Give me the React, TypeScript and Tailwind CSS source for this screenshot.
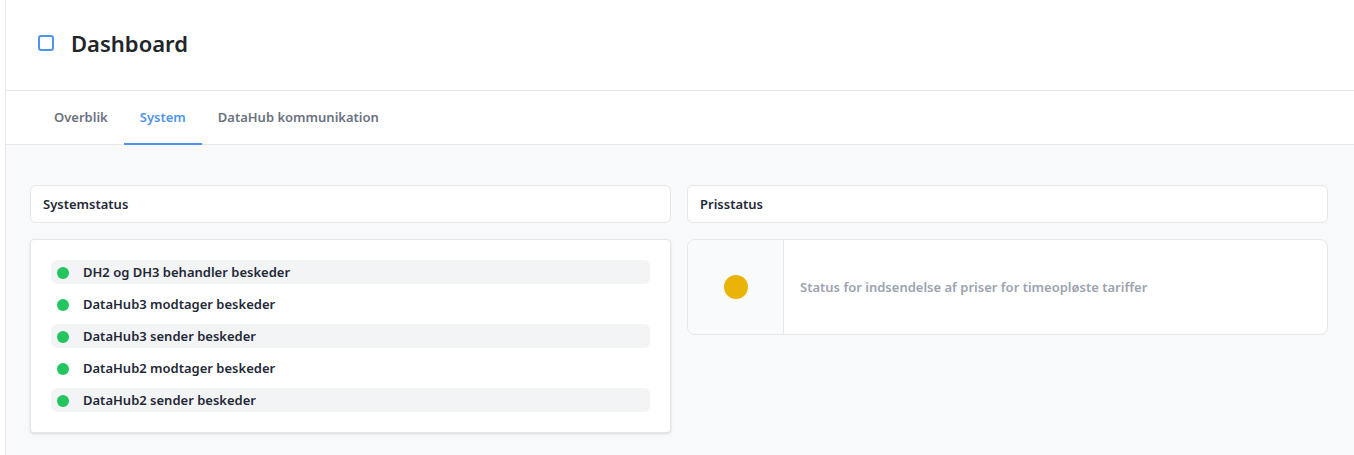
import React from 'react';

type Status = 'ok' | 'warning';

interface SystemCheck {
  label: string;
  status: Status;
}

const systemChecks: SystemCheck[] = [
  { label: 'DH2 og DH3 behandler beskeder', status: 'ok' },
  { label: 'DataHub3 modtager beskeder', status: 'ok' },
  { label: 'DataHub3 sender beskeder', status: 'ok' },
  { label: 'DataHub2 modtager beskeder', status: 'ok' },
  { label: 'DataHub2 sender beskeder', status: 'ok' },
];

const tabs = ['Overblik', 'System', 'DataHub kommunikation'];

function SectionHeader({ title }: { title: string }) {
  return (
    <div className="flex h-[38px] items-center rounded-md border border-[#e5e7eb] bg-white px-3 pt-px">
      <h2 className="text-[13px] font-semibold text-[#1f2937]">{title}</h2>
    </div>
  );
}

export default function App() {
  const activeTab = 'System';

  return (
    <div className="flex min-h-[455px] bg-white font-['Noto_Sans',sans-serif]">
      {/* Collapsed sidebar */}
      <aside className="w-[6px] shrink-0 border-r border-[#e5e7eb] bg-white" />

      <main className="flex min-w-0 flex-1 flex-col">
        {/* Page header */}
        <header className="flex h-[91px] items-center gap-[17px] border-b border-[#e5e7eb] pb-1 pl-8">
          <span className="h-4 w-4 rounded-[3px] border-2 border-[#4f94ec]" />
          <h1 className="text-[22px] font-semibold text-[#212529]">Dashboard</h1>
        </header>

        {/* Tabs */}
        <nav className="flex h-[54px] border-b border-[#e5e7eb] pl-8">
          {tabs.map((tab) => (
            <button
              key={tab}
              className={
                tab === activeTab
                  ? 'mb-[-1px] border-b-2 border-[#4f94ec] px-4 pt-0.5 text-[13px] font-semibold text-[#4f94ec]'
                  : 'mb-[-1px] border-b-2 border-transparent px-4 pt-0.5 text-[13px] font-semibold text-[#6b7280]'
              }
            >
              {tab}
            </button>
          ))}
        </nav>

        {/* Content */}
        <section className="flex-1 bg-[#f8f9fa] pb-6 pl-6 pr-[26px] pt-10">
          <div className="grid grid-cols-2 items-start gap-4">
            <div className="flex flex-col gap-4">
              <SectionHeader title="Systemstatus" />
              <div className="rounded-sm border border-[#e5e7eb] bg-white p-5 shadow-sm">
                <ul className="flex flex-col gap-2">
                  {systemChecks.map((check, i) => (
                    <li
                      key={check.label}
                      className={
                        i % 2 === 0
                          ? 'flex h-6 items-center gap-3.5 rounded-md bg-[#f3f4f6] pl-1.5 pt-px'
                          : 'flex h-6 items-center gap-3.5 rounded-md pl-1.5 pt-px'
                      }
                    >
                      <span
                        className={
                          check.status === 'ok'
                            ? 'h-3 w-3 rounded-full bg-[#22c55e]'
                            : 'h-3 w-3 rounded-full bg-[#eab308]'
                        }
                      />
                      <span className="text-[13px] font-semibold text-[#1f2937]">{check.label}</span>
                    </li>
                  ))}
                </ul>
              </div>
            </div>

            <div className="flex flex-col gap-4">
              <SectionHeader title="Prisstatus" />
              <div className="flex h-[96px] overflow-hidden rounded-lg border border-[#e5e7eb] bg-white">
                <div className="flex w-24 shrink-0 items-center justify-center border-r border-[#e5e7eb] bg-[#f9fafb]">
                  <span className="h-6 w-6 rounded-full bg-[#eab308]" />
                </div>
                <div className="flex items-center pl-4 pt-px">
                  <p className="text-[13px] font-semibold text-[#9ca3af]">
                    Status for indsendelse af priser for timeopløste tariffer
                  </p>
                </div>
              </div>
            </div>
          </div>
        </section>
      </main>
    </div>
  );
}
